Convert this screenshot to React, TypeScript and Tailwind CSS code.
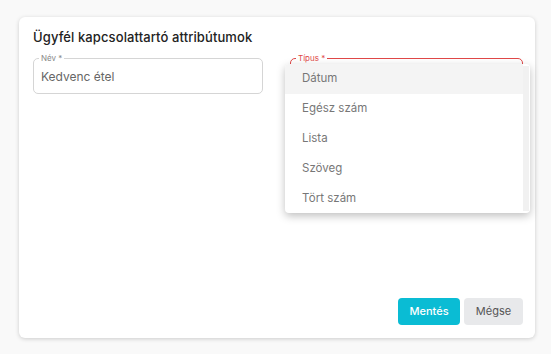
import React from 'react';

const options = ['Dátum', 'Egész szám', 'Lista', 'Szöveg', 'Tört szám'];

export default function App() {
    return (
        <div className="w-[551px] h-[354px] bg-[#f9f9f9] pt-[17px] pl-[19px]" style={{ fontFamily: 'Inter, "Open Sans", sans-serif' }}>
            <div className="w-[516px] h-[321px] bg-white rounded-md shadow-[0_1px_4px_rgba(0,0,0,0.18)] pl-[14px] pr-[12px] pt-[12px] pb-[13px] flex flex-col">
                <h2 className="text-[13px] font-medium text-[#222] leading-[16px] tracking-[0.1px]">Ügyfél kapcsolattartó attribútumok</h2>
                <div className="flex gap-[27px] mt-[13px]">
                    <div className="relative w-[230px] h-[36px] border border-[#d5d5d5] rounded-[5px] flex items-center px-[7px]">
                        <span className="absolute -top-[6px] left-[5px] bg-white px-[2px] text-[8px] leading-[10px] text-[#888]">Név *</span>
                        <span className="text-[12px] text-[#666] mt-[1px]">Kedvenc étel</span>
                    </div>
                    <div className="relative w-[233px] h-[36px] border border-[#e04848] rounded-[5px]">
                        <span className="absolute -top-[6px] left-[5px] bg-white px-[2px] text-[8px] leading-[10px] text-[#e04848]">Típus *</span>
                        <div className="absolute top-[5px] -left-[6px] w-[245px] h-[149px] bg-white rounded-[4px] shadow-[0_3px_8px_rgba(0,0,0,0.25)] flex z-10">
                            <ul className="flex-1 py-0">
                                {options.map((o, i) => (
                                    <li key={o} className={`h-[30px] flex items-center pl-[17px] text-[11.5px] text-[#777] ${i === 0 ? 'bg-[#f4f4f4] rounded-tl-[4px]' : ''}`}>{o}</li>
                                ))}
                            </ul>
                            <div className="w-[6px] bg-[#f1f1f1] my-[2px] mr-[1px]" />
                        </div>
                    </div>
                </div>
                <div className="mt-auto flex justify-end gap-[4px]">
                    <button className="w-[62px] h-[27px] rounded-[4px] bg-[#0abcd4] text-white text-[11px] font-medium">Mentés</button>
                    <button className="w-[59px] h-[27px] rounded-[4px] bg-[#e8e9eb] text-[#555] text-[11px]">Mégse</button>
                </div>
            </div>
        </div>
    );
}
